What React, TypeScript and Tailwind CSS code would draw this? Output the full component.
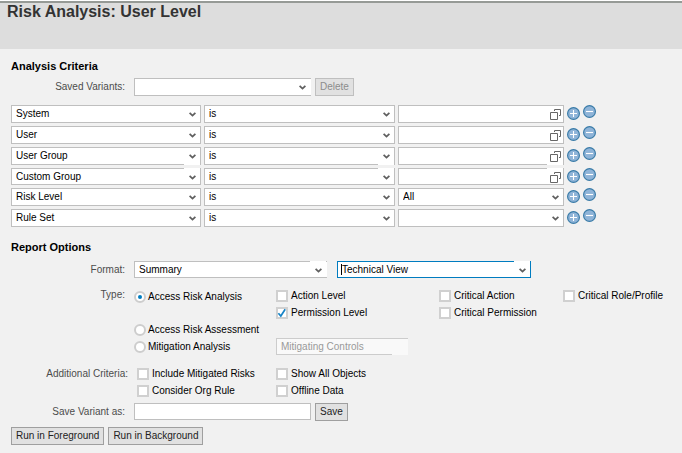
import { useState } from "react";
import type { ReactNode } from "react";
import clsx from "clsx";

type Side = "top" | "bottom";

const CRITERIA: { name: string; lookup?: boolean; value?: string; open?: Side }[] = [
  { name: "System", lookup: true },
  { name: "User", lookup: true },
  { name: "User Group", lookup: true, open: "bottom" },
  { name: "Custom Group", lookup: true, open: "top" },
  { name: "Risk Level", value: "All" },
  { name: "Rule Set" },
];

const FIELD = "block w-full border px-1 text-black outline-none";

// breaks the field border next to its icon
function Opening({ side }: { side?: Side }) {
  if (!side) return null;
  return (
    <span
      className={clsx(
        "pointer-events-none absolute right-px h-px w-4 bg-white",
        side === "top" ? "top-0" : "bottom-0"
      )}
    />
  );
}

function Select({
  label,
  id,
  options,
  active,
  open,
  flush,
}: {
  label?: string;
  id?: string;
  options: string[];
  active?: boolean;
  open?: Side;
  flush?: boolean;
}) {
  return (
    <div className="relative w-full">
      <select
        id={id}
        aria-label={label}
        className={clsx(
          FIELD,
          "appearance-none bg-white",
          open === "top" ? "h-[17px]" : "h-[18px]",
          active ? "border-[#007cc0]" : "border-[#bfbfbf]",
          flush && "border-r-0"
        )}
      >
        {options.map((o) => (
          <option key={o}>{o}</option>
        ))}
      </select>
      <Opening side={open} />
      {active && <span className="pointer-events-none absolute inset-y-[3px] left-1 w-px bg-black" />}
      <svg
        className="pointer-events-none absolute right-[5px] top-[7px] h-[5px] w-[7px]"
        viewBox="0 0 7 5"
        fill="none"
        stroke="#5f5f5f"
        strokeWidth="1.8"
      >
        <path d="M0.6 0.8 3.5 3.6 6.4 0.8" />
      </svg>
    </div>
  );
}

function LookupField({ label, open }: { label: string; open?: Side }) {
  return (
    <div className="relative w-full">
      <input
        type="text"
        aria-label={label}
        className={clsx(
          FIELD,
          "border-[#bfbfbf] bg-white",
          open === "top" ? "h-[17px]" : "h-[18px]"
        )}
      />
      <Opening side={open} />
      <button type="button" aria-label={`Search ${label}`} className="absolute right-[3px] top-1">
        <svg className="block h-[11px] w-[11px]" viewBox="0 0 11 11" fill="none" stroke="#666">
          <path d="M0.5 3.5h7v7h-7z" />
          <path d="M4.5 2V0.5h6v6H9" />
        </svg>
      </button>
    </div>
  );
}

function RoundButton({ label, minus }: { label: string; minus?: boolean }) {
  return (
    <button type="button" aria-label={label} className={minus ? "self-start" : "self-end"}>
      <svg className="block h-[13px] w-[13px]" viewBox="0 0 13 13">
        <circle cx="6.5" cy="6.5" r="5.9" fill="#8fb4d8" stroke="#3b7ca8" strokeWidth="1.2" />
        <path d={minus ? "M3 6.5h7" : "M3 6.5h7M6.5 3v7"} stroke="#fff" strokeWidth="1.1" />
      </svg>
    </button>
  );
}

function Check({ label, checked, className }: { label: string; checked?: boolean; className?: string }) {
  return (
    <label className={clsx("flex items-center gap-[3px] whitespace-nowrap", className)}>
      <span className="relative h-3 w-3 shrink-0">
        <input
          type="checkbox"
          defaultChecked={checked}
          className="peer block h-3 w-3 appearance-none border-2 border-[#d0d0d0] bg-white"
        />
        <svg
          className="pointer-events-none absolute inset-0 hidden h-3 w-3 peer-checked:block"
          viewBox="0 0 12 12"
          fill="none"
          stroke="#1683c6"
          strokeWidth="1.7"
        >
          <path d="M2.4 6.2 4.8 9 9.2 2.2" />
        </svg>
      </span>
      {label}
    </label>
  );
}

function Radio({
  label,
  value,
  onChange,
  className,
}: {
  label: string;
  value: string;
  onChange: (v: string) => void;
  className?: string;
}) {
  return (
    <label className={clsx("flex items-center gap-0.5 whitespace-nowrap", className)}>
      <span className="relative h-3 w-3 shrink-0">
        <input
          type="radio"
          name="type"
          checked={value === label}
          onChange={() => onChange(label)}
          className="peer block h-3 w-3 appearance-none rounded-full border-2 border-[#cdcdcd] bg-white"
        />
        <span className="pointer-events-none absolute inset-1 hidden rounded-full bg-[#007cc0] peer-checked:block" />
      </span>
      {label}
    </label>
  );
}

function Button({ children, disabled }: { children: ReactNode; disabled?: boolean }) {
  return (
    <button
      type="button"
      disabled={disabled}
      className="h-[18px] shrink-0 border border-[#9f9f9f] bg-[#e1e1e1] px-1 text-[#222] disabled:border-[#bfbfbf] disabled:text-[#8c8c8c]"
    >
      {children}
    </button>
  );
}

function Row({
  label,
  htmlFor,
  wide,
  children,
}: {
  label: string;
  htmlFor?: string;
  wide?: boolean;
  children: ReactNode;
}) {
  const cls = clsx("shrink-0 pt-[3px] text-right text-[#4c4c4c]", wide ? "w-[117px]" : "w-[114px]");
  return (
    <div className="flex gap-[9px]">
      {htmlFor ? (
        <label htmlFor={htmlFor} className={cls}>
          {label}
        </label>
      ) : (
        <span className={cls}>{label}</span>
      )}
      {children}
    </div>
  );
}

export default function App() {
  const [type, setType] = useState("Access Risk Analysis");

  return (
    <main className="min-h-screen bg-[#f1f1f1] pb-2 font-['Liberation_Sans',Arial,sans-serif] text-[10px] leading-3 text-black">
      <header className="border-t border-white bg-[#dddddd]">
        <div className="h-12 border-t-2 border-[#969a96] pl-[7px]">
          <h1 className="text-[16px] font-bold leading-[17px] text-[#333]">Risk Analysis: User Level</h1>
        </div>
      </header>

      <form className="px-[11px] pt-2.5" onSubmit={(e) => e.preventDefault()}>
        <h2 className="text-[11px] font-bold leading-[14px]">Analysis Criteria</h2>
        <div className="mt-[5px]">
          <Row label="Saved Variants:" htmlFor="variants">
            <div className="flex gap-1">
              <div className="w-[177px]">
                <Select id="variants" options={[""]} flush />
              </div>
              <Button disabled>Delete</Button>
            </div>
          </Row>
        </div>

        {/* Criteria rows */}
        <div className="mt-[9px] flex max-w-[585px] flex-col gap-[3px]">
          {CRITERIA.map((c) => (
            <div key={c.name} className="grid grid-cols-[190fr_191fr_166fr_29px] gap-[3px]">
              <Select label="Field" options={[c.name]} open={c.open} />
              <Select label={`${c.name} operator`} options={["is"]} open={c.open} />
              {c.lookup ? (
                <LookupField label={c.name} open={c.open} />
              ) : (
                <Select label={c.name} options={[c.value ?? ""]} />
              )}
              <div className="flex h-[15px] gap-[3px]">
                <RoundButton label={`Add ${c.name}`} />
                <RoundButton minus label={`Remove ${c.name}`} />
              </div>
            </div>
          ))}
        </div>

        <h2 className="mt-[13px] text-[11px] font-bold leading-[14px]">Report Options</h2>
        <div className="mt-[7px]">
          <Row label="Format:" htmlFor="format">
            <div className="flex gap-2.5">
              <div className="w-[193px]">
                <Select id="format" options={["Summary"]} open="top" flush />
              </div>
              <div className="w-[194px]">
                <Select label="View" options={["Technical View"]} open="top" active />
              </div>
            </div>
          </Row>
        </div>

        <div className="mt-2">
          <Row label="Type:">
            <div className="grid grid-cols-[142px_163px_124px_auto] grid-rows-[repeat(4,17px)] pt-px">
              <Radio
                label="Access Risk Analysis"
                value={type}
                onChange={setType}
                className="row-span-2 h-5"
              />
              <Check label="Action Level" />
              <Check label="Critical Action" />
              <Check label="Critical Role/Profile" />
              <Check label="Permission Level" checked />
              <Check label="Critical Permission" className="col-span-2" />
              <Radio
                label="Access Risk Assessment"
                value={type}
                onChange={setType}
                className="col-span-4"
              />
              <Radio label="Mitigation Analysis" value={type} onChange={setType} />
              <div className="relative w-[132px]">
                <input
                  type="text"
                  aria-label="Mitigation type"
                  disabled
                  defaultValue="Mitigating Controls"
                  className="block h-[17px] w-full border border-r-0 border-[#cccccc] bg-[#f9f9f9] px-1 text-[#999]"
                />
                <span className="absolute bottom-0 right-0 h-px w-4 bg-[#f9f9f9]" />
              </div>
            </div>
          </Row>
        </div>

        <div className="mt-2.5">
          <Row label="Additional Criteria:" wide>
            <div className="grid grid-cols-[139px_auto] grid-rows-[repeat(2,17px)]">
              <Check label="Include Mitigated Risks" />
              <Check label="Show All Objects" />
              <Check label="Consider Org Rule" />
              <Check label="Offline Data" />
            </div>
          </Row>
        </div>

        <div className="mt-1">
          <Row label="Save Variant as:" htmlFor="save-as">
            <div className="flex gap-1">
              <div className="w-[177px]">
                <input
                  id="save-as"
                  type="text"
                  className={clsx(FIELD, "h-[17px] border-[#bfbfbf] bg-white")}
                />
              </div>
              <Button>Save</Button>
            </div>
          </Row>
        </div>

        <div className="mt-1.5 flex gap-1">
          <Button>Run in Foreground</Button>
          <Button>Run in Background</Button>
        </div>
      </form>
    </main>
  );
}
